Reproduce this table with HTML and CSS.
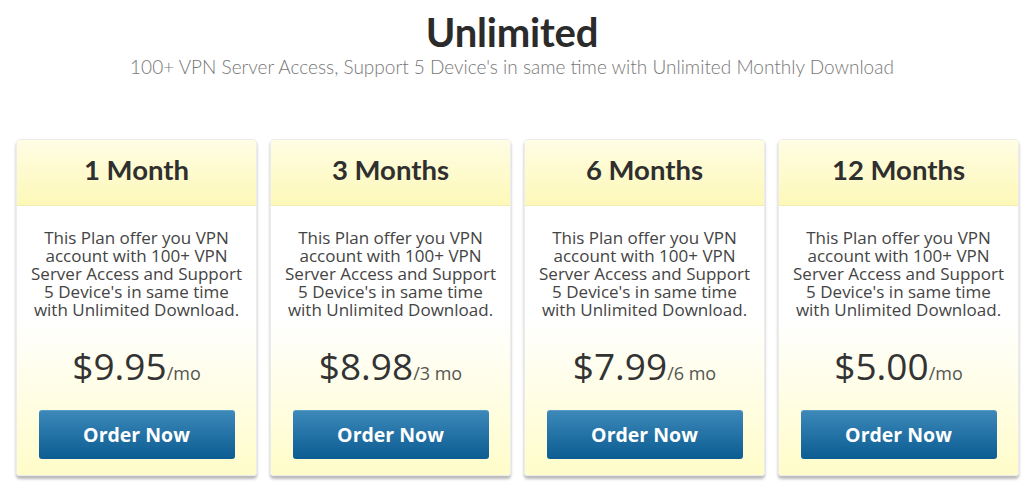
FILE: index.html
```html
<!DOCTYPE html>
<html>
<head>
<meta charset="utf-8">
<link rel="stylesheet" href="styles.css">
</head>
<body>
<header class="intro">
  <h1 class="title">Unlimited</h1>
  <p class="subtitle">100+ VPN Server Access, Support 5 Device's in same time with Unlimited Monthly Download</p>
</header>
<section class="plans">
  <div class="card">
    <div class="card-head">1 Month</div>
    <div class="card-body">
      <p class="desc">This Plan offer you VPN account with 100+ VPN Server Access and Support 5 Device's in same time with Unlimited Download.</p>
      <div class="price"><span class="amount">$9.95</span><span class="per">/mo</span></div>
      <a class="btn">Order Now</a>
    </div>
  </div>
  <div class="card">
    <div class="card-head">3 Months</div>
    <div class="card-body">
      <p class="desc">This Plan offer you VPN account with 100+ VPN Server Access and Support 5 Device's in same time with Unlimited Download.</p>
      <div class="price"><span class="amount">$8.98</span><span class="per">/3 mo</span></div>
      <a class="btn">Order Now</a>
    </div>
  </div>
  <div class="card">
    <div class="card-head">6 Months</div>
    <div class="card-body">
      <p class="desc">This Plan offer you VPN account with 100+ VPN Server Access and Support 5 Device's in same time with Unlimited Download.</p>
      <div class="price"><span class="amount">$7.99</span><span class="per">/6 mo</span></div>
      <a class="btn">Order Now</a>
    </div>
  </div>
  <div class="card">
    <div class="card-head">12 Months</div>
    <div class="card-body">
      <p class="desc">This Plan offer you VPN account with 100+ VPN Server Access and Support 5 Device's in same time with Unlimited Download.</p>
      <div class="price"><span class="amount">$5.00</span><span class="per">/mo</span></div>
      <a class="btn">Order Now</a>
    </div>
  </div>
</section>
</body>
</html>
```
FILE: styles.css
```css
* { box-sizing: border-box; }
html, body { margin: 0; padding: 0; background: #fff; }
body { width: 1024px; height: 491px; overflow: hidden; font-family: "Open Sans", "DejaVu Sans", sans-serif; }

.intro { text-align: center; padding-top: 10px; }
.title {
  margin: 0;
  font-family: "Lato", "Noto Sans", sans-serif;
  font-weight: 700;
  font-size: 40px;
  line-height: 44px;
  color: #2b2b2b;
  letter-spacing: -0.2px;
}
.subtitle {
  margin: 2px 0 0;
  font-family: "Lato", "Noto Sans", sans-serif;
  font-weight: 300;
  font-size: 19px;
  line-height: 22px;
  color: #777;
}

.plans {
  display: flex;
  gap: 13px;
  padding: 0 0 0 16px;
  margin-top: 61px;
}
.card {
  width: 241px;
  height: 337px;
  display: flex;
  flex-direction: column;
  border: 1px solid #ececec;
  border-radius: 4px;
  box-shadow: 0 3px 3px rgba(0,0,0,0.28);
  overflow: hidden;
}
.card-head {
  height: 66px;
  flex: none;
  display: flex;
  align-items: center;
  justify-content: center;
  background: linear-gradient(#fffde4, #fdf8b8);
  border-bottom: 1px solid #f1ecb0;
  font-family: "Lato", "Noto Sans", sans-serif;
  font-weight: 700;
  font-size: 27.5px;
  color: #2f2f2f;
  padding-bottom: 6px;
}
.card-body {
  flex: 1;
  display: flex;
  flex-direction: column;
  align-items: center;
  background: linear-gradient(#ffffff 0%, #ffffff 42%, #fffcc9 100%);
  padding: 23px 0 0;
}
.desc {
  margin: 0;
  width: 214px;
  text-align: center;
  font-size: 17px;
  line-height: 18px;
  color: #444;
}
.price {
  margin-top: 25px;
  color: #333;
  line-height: 44px;
}
.amount { font-size: 37px; }
.per { font-size: 18px; color: #555; }
.btn {
  margin-top: 14px;
  width: 196px;
  height: 49px;
  display: flex;
  align-items: center;
  justify-content: center;
  border-radius: 3px;
  background: linear-gradient(#3d89ba, #0b5c92);
  color: #fff;
  font-weight: 700;
  font-size: 19.5px;
  box-shadow: inset 0 1px 0 rgba(255,255,255,0.15);
}
```
